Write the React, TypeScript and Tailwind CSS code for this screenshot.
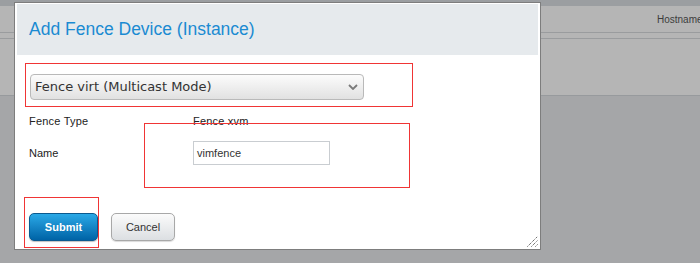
import React from 'react'

function ResizeGrip() {
  return (
    <svg width="11" height="11" viewBox="0 0 11 11" className="absolute right-[2px] bottom-[2px]">
      <g stroke="#333" strokeWidth="1" strokeDasharray="1 1">
        <line x1="0.5" y1="10.5" x2="10.5" y2="0.5" />
        <line x1="4.5" y1="10.5" x2="10.5" y2="4.5" />
        <line x1="8.5" y1="10.5" x2="10.5" y2="8.5" />
      </g>
    </svg>
  )
}

export default function App() {
  return (
    <div className="relative w-[700px] h-[263px] overflow-hidden bg-[#a5a6a8] font-['Liberation_Sans',sans-serif]">
      {/* page behind the modal */}
      <div className="h-[6px] bg-[#9b9ea1]" />
      <div className="h-[26px] bg-[#b5b5b5] flex items-center pl-[657px]">
        <span className="text-[10px] text-[#3c3c3c] whitespace-nowrap">Hostname</span>
      </div>
      <div className="h-px bg-[#9a9c9e]" />
      <div className="h-[5px] bg-[#b5b5b5]" />
      <div className="h-px bg-[#9a9c9e]" />
      <div className="h-[56px] bg-[#b5b5b5]" />
      <div className="h-px bg-[#979a9d]" />

      {/* modal */}
      <div className="absolute left-[14px] top-[2px] w-[527px] h-[248px] bg-white border border-[#7d7d7d] pt-px px-[2px]">
        <div className="h-[51px] bg-[#e6eaed] flex items-center pl-[12px]">
          <h1 className="text-[17.5px] text-[#1b8bd2] font-['Liberation_Sans',sans-serif]">Add Fence Device (Instance)</h1>
        </div>

        <div className="pl-[12px]">
          <div className="mt-[19px] ml-px w-[334px] h-[26px] rounded-[4px] border border-[#b9b9b9] bg-gradient-to-b from-[#fcfcfc] to-[#e1e1e1] flex items-center justify-between pl-[4px] pr-[5px]">
            <span className="text-[13px] text-[#333] font-['DejaVu_Sans',sans-serif]">Fence virt (Multicast Mode)</span>
            <svg width="10" height="6" viewBox="0 0 10 6">
              <path d="M1 1l4 4 4-4" fill="none" stroke="#7a7a7a" strokeWidth="1.8" />
            </svg>
          </div>

          <div className="mt-[14px] h-[14px] flex items-center text-[11px] text-[#222] tracking-[0.2px]">
            <span className="w-[164px]">Fence Type</span>
            <span>Fence xvm</span>
          </div>

          <div className="mt-[13px] h-[24px] flex items-center text-[11px] text-[#222]">
            <span className="w-[164px]">Name</span>
            <div className="w-[137px] h-[24px] border border-[#c9cdd1] flex items-center pl-[3px] text-[#333]">vimfence</div>
          </div>

          <div className="mt-[48px] flex gap-[13px]">
            <button className="w-[69px] h-[28px] rounded-[5px] border border-[#0b5a8f] bg-gradient-to-b from-[#2aa9e7] to-[#0063a6] text-white text-[11px] font-bold shadow-[0_1px_1px_rgba(0,0,0,0.25)]">
              Submit
            </button>
            <button className="w-[64px] h-[28px] rounded-[5px] border border-[#a8a8a8] bg-gradient-to-b from-[#fbfbfb] to-[#dcdfe2] text-[#333] text-[11px] shadow-[0_1px_1px_rgba(0,0,0,0.15)]">
              Cancel
            </button>
          </div>
        </div>

        <ResizeGrip />
      </div>

      {/* annotation boxes */}
      <div className="absolute left-[25px] top-[63px] w-[388px] h-[44px] border border-[#f03535]" />
      <div className="absolute left-[144px] top-[123px] w-[266px] h-[65px] border border-[#f03535]" />
      <div className="absolute left-[24px] top-[197px] w-[75px] h-[51px] border border-[#f03535]" />
    </div>
  )
}
